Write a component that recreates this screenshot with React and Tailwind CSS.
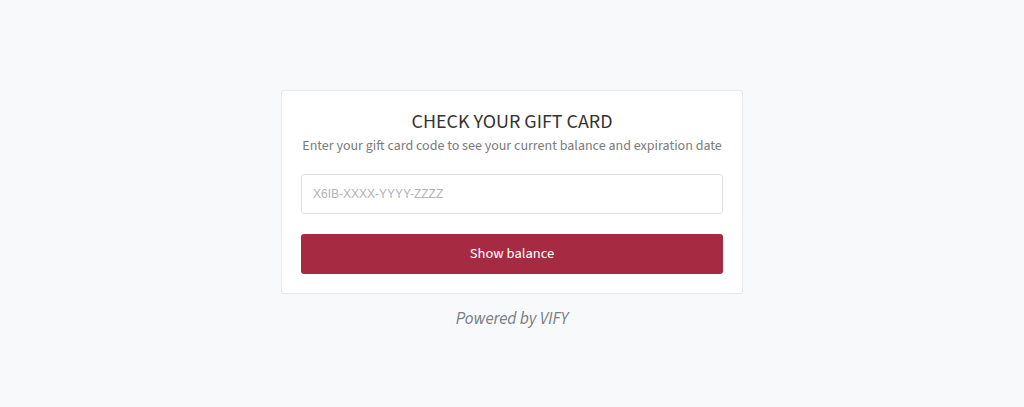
export default function App() {
  return (
    <div className="min-h-[407px] w-full bg-[#f8f9fa] pt-[90px] font-['Source_Sans_3','Source_Sans_Pro','Lato',sans-serif]">
      <div className="mx-auto flex w-[462px] flex-col items-stretch">
        <div className="rounded-[3px] border border-[#e6e8eb] bg-white px-[19px] pb-[19px] pt-[19px]">
          <h1 className="text-center text-[20px] leading-[24px] text-[#333333]">CHECK YOUR GIFT CARD</h1>
          <p className="mt-[2px] text-center text-[14px] leading-[20px] text-[#7b7b7b]">
            Enter your gift card code to see your current balance and expiration date
          </p>
          <input
            type="text"
            placeholder="X6IB-XXXX-YYYY-ZZZZ"
            className="mt-[18px] block h-[40px] w-full rounded-[3px] border border-[#dcdfe3] bg-white px-[11px] font-['Liberation_Sans',Arial,sans-serif] text-[12px] text-[#333] outline-none placeholder:text-[#b3b3b3]"
          />
          <button className="mt-[20px] flex h-[40px] w-full items-center justify-center rounded-[3px] bg-[#a62b42] text-[14.5px] text-white">
            Show balance
          </button>
        </div>
        <div className="mt-[14px] text-center text-[17px] italic leading-[22px] text-[#7a7d82]">Powered by VIFY</div>
      </div>
    </div>
  );
}
